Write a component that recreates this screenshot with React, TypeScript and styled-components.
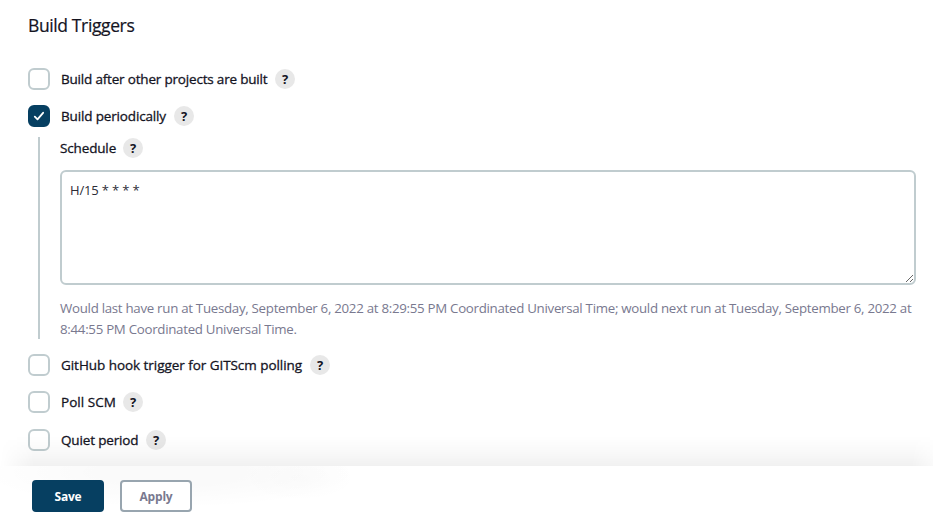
import React from "react";
import styled, { createGlobalStyle } from "styled-components";

const GlobalStyle = createGlobalStyle`
  * { box-sizing: border-box; }
  html, body { margin: 0; background: #fff; overflow: hidden; }
  body { font-family: "Open Sans", "Noto Sans", sans-serif; color: #14141f; }
`;

const Page = styled.div`
  height: 517px;
  display: flex;
  flex-direction: column;
`;

const Content = styled.main`
  height: 466px;
  padding: 13px 17px 0 28px;
  display: flex;
  flex-direction: column;
  overflow: hidden;
`;

const Title = styled.h2<{ $spacing: number }>`
  margin: 0 0 31px;
  font-size: 17.5px;
  line-height: 24px;
  font-weight: 400;
  -webkit-text-stroke: 0.2px currentColor;
  letter-spacing: ${(p) => p.$spacing}px;
`;

const OptionRow = styled.div<{ $gap: number }>`
  display: flex;
  align-items: center;
  flex: none;
  height: 22px;
  margin-bottom: ${(p) => p.$gap}px;
`;

const CheckBox = styled.span<{ $checked?: boolean }>`
  display: flex;
  align-items: center;
  justify-content: center;
  width: 22px;
  height: 22px;
  margin-right: 11px;
  border-radius: 6px;
  border: 2px solid ${(p) => (p.$checked ? "#063f61" : "#c0cccf")};
  background: ${(p) => (p.$checked ? "#063f61" : "#fff")};
`;

const Label = styled.span<{ $width: number; $spacing: number }>`
  width: ${(p) => p.$width}px;
  font-size: 13.5px;
  line-height: 22px;
  font-weight: 400;
  -webkit-text-stroke: 0.3px currentColor;
  white-space: nowrap;
  letter-spacing: ${(p) => p.$spacing}px;
`;

const Help = styled.span`
  display: flex;
  align-items: center;
  justify-content: center;
  width: 20px;
  height: 20px;
  border-radius: 50%;
  background: #e8e8e8;
  font: 700 13px/20px "Noto Sans", sans-serif;
`;

const Nested = styled.section`
  flex: none;
  height: 202px;
  margin: 0 0 15px 10px;
  padding-left: 20px;
  border-left: 2px solid #c0cccf;
`;

const Schedule = styled.textarea`
  display: block;
  width: 856px;
  height: 115px;
  margin: 0 0 13px;
  padding: 8px;
  border: 2px solid #c0cccf;
  border-radius: 6px;
  outline: none;
  resize: vertical;
  color: #2c2c36;
  background: #fff;
  font: 400 13px/20px "Open Sans", sans-serif;
  letter-spacing: -0.16px;
`;

const Hint = styled.p`
  margin: 0;
  color: #79798f;
  font-size: 13.3px;
  line-height: 21px;
`;

const HintLine = styled.span<{ $spacing: number }>`
  display: block;
  white-space: nowrap;
  letter-spacing: ${(p) => p.$spacing}px;
`;

const Footer = styled.footer`
  position: relative;
  height: 51px;
  display: flex;
  gap: 16px;
  padding: 14px 32px 0;
  background:
    radial-gradient(ellipse 60px 24px at 300px 12px, rgba(0, 0, 0, 0.012), transparent 100%),
    radial-gradient(ellipse 190px 36px at 170px 6px, rgba(0, 0, 0, 0.02) 40%, transparent 100%),
    #fff;

  &::before {
    content: "";
    position: absolute;
    left: 0;
    right: 0;
    bottom: 100%;
    height: 30px;
    background: linear-gradient(to top, rgba(0, 0, 0, 0.056), rgba(0, 0, 0, 0.025) 50%, transparent);
    mask-image: linear-gradient(to right, transparent, #000 34px, #000 912px, rgba(0, 0, 0, 0.4));
  }
`;

const Button = styled.button<{ $primary?: boolean }>`
  width: 72px;
  height: 32px;
  padding: 0;
  border-radius: 4px;
  border: 2px solid ${(p) => (p.$primary ? "#063f61" : "#98a5af")};
  background: ${(p) => (p.$primary ? "#063f61" : "#fff")};
  color: ${(p) => (p.$primary ? "#fff" : "#79798f")};
  font: 700 12px/30px "Open Sans", sans-serif;
  letter-spacing: -0.2px;
`;

type OptionProps = { text: string; width: number; gap: number; spacing?: number; checked?: boolean };

function Option({ text, width, gap, spacing = -0.15, checked }: OptionProps) {
  return (
    <OptionRow $gap={gap}>
      <CheckBox $checked={checked} role="checkbox" aria-checked={!!checked}>
        {checked && (
          <svg width="12" height="12" viewBox="0 0 12 12" fill="none" stroke="#fff" strokeWidth="1.8" strokeLinecap="round" strokeLinejoin="round">
            <path d="M1.8 6.7 4.5 9.3 10.1 2.8" />
          </svg>
        )}
      </CheckBox>
      <Label $width={width} $spacing={spacing}>{text}</Label>
      <Help>?</Help>
    </OptionRow>
  );
}

export default function App() {
  return (
    <>
      <GlobalStyle />
      <Page>
        <Content>
          <Title $spacing={-0.38}>Build Triggers</Title>
          <Option text="Build after other projects are built" width={214} gap={15} spacing={-0.19} />
          <Option text="Build periodically" width={113} gap={10} checked />
          <Nested>
            <OptionRow $gap={11}>
              <Label $width={63} $spacing={-0.15}>Schedule</Label>
              <Help>?</Help>
            </OptionRow>
            <Schedule defaultValue="H/15 * * * *" spellCheck={false} />
            <Hint>
              <HintLine $spacing={-0.29}>
                Would last have run at Tuesday, September 6, 2022 at 8:29:55 PM Coordinated Universal Time; would next run at Tuesday, September 6, 2022 at
              </HintLine>
              <HintLine $spacing={-0.29}>8:44:55 PM Coordinated Universal Time.</HintLine>
            </Hint>
          </Nested>
          <Option text="GitHub hook trigger for GITScm polling" width={249} gap={15} spacing={-0.05} />
          <Option text="Poll SCM" width={62} gap={16} spacing={0.05} />
          <Option text="Quiet period" width={85} gap={0} />
        </Content>
        <Footer>
          <Button $primary>Save</Button>
          <Button>Apply</Button>
        </Footer>
      </Page>
    </>
  );
}
